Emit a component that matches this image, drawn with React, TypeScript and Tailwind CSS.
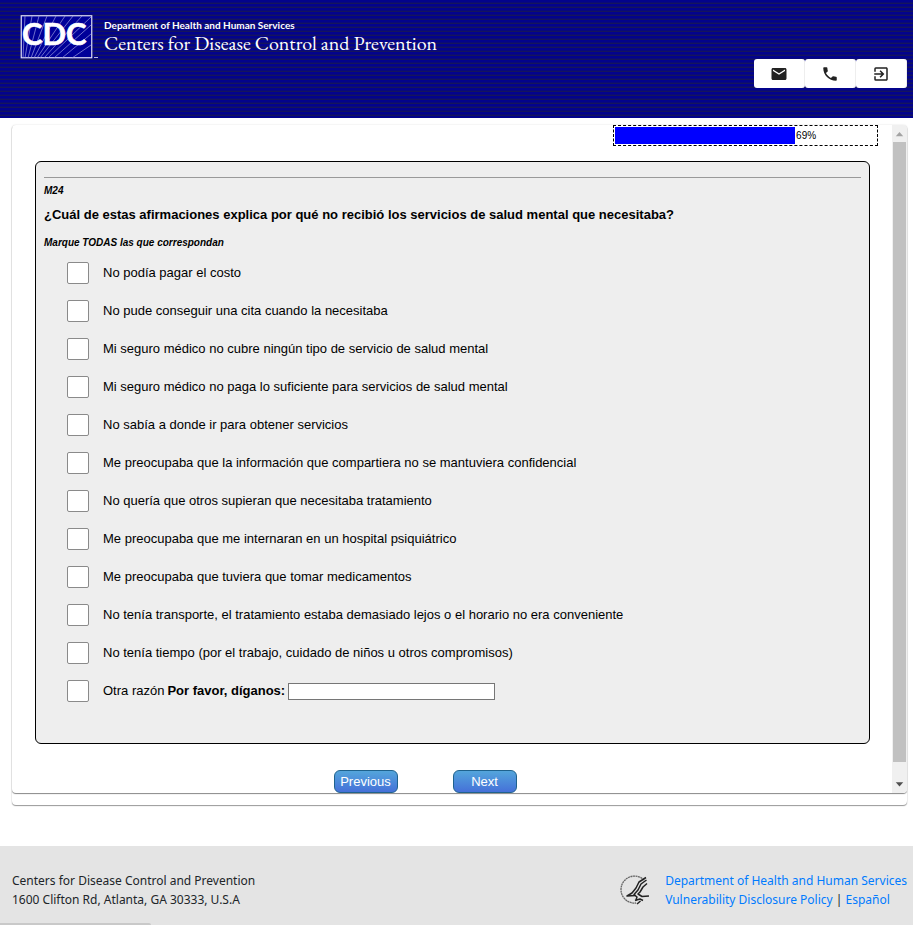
import { MdEmail, MdExitToApp, MdPhone } from 'react-icons/md';

const options = [
  'No podía pagar el costo',
  'No pude conseguir una cita cuando la necesitaba',
  'Mi seguro médico no cubre ningún tipo de servicio de salud mental',
  'Mi seguro médico no paga lo suficiente para servicios de salud mental',
  'No sabía a donde ir para obtener servicios',
  'Me preocupaba que la información que compartiera no se mantuviera confidencial',
  'No quería que otros supieran que necesitaba tratamiento',
  'Me preocupaba que me internaran en un hospital psiquiátrico',
  'Me preocupaba que tuviera que tomar medicamentos',
  'No tenía transporte, el tratamiento estaba demasiado lejos o el horario no era conveniente',
  'No tenía tiempo (por el trabajo, cuidado de niños u otros compromisos)',
];

const headerActions = [
  { label: 'Email', Icon: MdEmail },
  { label: 'Phone', Icon: MdPhone },
  { label: 'Exit', Icon: MdExitToApp },
];

const checkboxClass =
  'h-[22px] w-[22px] shrink-0 appearance-none rounded-[2px] border border-[#8a8a8a] bg-white checked:bg-blue-600';

function CdcLogo() {
  return (
    <svg viewBox="0 0 78 44" className="h-11 w-[78px] shrink-0" role="img" aria-label="CDC">
      <rect x="1.25" y="0.75" width="70.5" height="42" fill="#000099" stroke="#ddddf5" strokeWidth="1.2" />
      <g stroke="#9c9ce0" strokeWidth="0.7">
        <path d="M3 43L5 1M5 43L12 1M8 43L19 1M11 43L27 1M14 43L36 1M17 43L45 1M20 43L53 1M24 43L62 1M28 43L71 2M34 43L71 10M42 43L71 19M52 43L71 30" />
      </g>
      <text
        x="2"
        y="30"
        fill="#fff"
        stroke="#fff"
        strokeWidth="0.6"
        fontSize="31"
        fontWeight="700"
        fontFamily="Lato, sans-serif"
      >
        CDC
      </text>
      <path d="M74 42.5h4" stroke="#b8b8dd" strokeWidth="1" />
    </svg>
  );
}

function HhsLogo() {
  return (
    <svg viewBox="0 0 30 30" className="h-[30px] w-[30px] shrink-0" role="img" aria-label="HHS" fill="none">
      <path d="M25 5A13.5 13.5 0 1 0 17 28" stroke="#666" strokeWidth="1.3" strokeDasharray="2 0.5" />
      <g stroke="#222" strokeWidth="1.5" strokeLinejoin="round">
        <path d="M27 2.5L20 7L17 13L13 18L8 21L17 20.5" />
        <path d="M27.5 5L22 9L19 15L15 19.5L18 22L17 25" />
        <path d="M28 8.5L24 12L21 17L19 19L23 21.5L30 21" />
        <path d="M16 25.5L21 24L24 25.5M18 29L21.5 26" />
      </g>
    </svg>
  );
}

function Header() {
  return (
    <header className="h-[118px] bg-[repeating-linear-gradient(to_bottom,#03038c_0px,#03038c_2px,#0a0a78_2px,#0a0a78_3px,#15155c_3px,#15155c_4px)] pt-[15px] pr-1.5 pl-5 text-white">
      <div className="flex items-start gap-1.5">
        <CdcLogo />
        <div className="pt-1">
          <p className="font-[Lato,sans-serif] text-[10px] leading-3 font-bold">
            Department of Health and Human Services
          </p>
          <p className="font-['EB_Garamond','Liberation_Serif',serif] text-[20px] leading-6">
            Centers for Disease Control and Prevention
          </p>
        </div>
      </div>
      <div className="flex justify-end">
        {headerActions.map(({ label, Icon }) => (
          <button
            key={label}
            type="button"
            aria-label={label}
            className="flex h-[29px] w-[51px] items-center justify-center rounded-[3px] border-r border-[#eee] bg-white text-[#222]"
          >
            <Icon size={18} />
          </button>
        ))}
      </div>
    </header>
  );
}

function ProgressBar({ value }: { value: number }) {
  return (
    <div className="flex h-[21px] w-[265px] border border-dashed border-black p-px">
      <div className="h-[17px] bg-[#0000ff]" style={{ width: `${value}%` }} />
      <span className="pl-px text-[10px] leading-[17px]">{value}%</span>
    </div>
  );
}

function ScrollTrack() {
  return (
    <div className="flex w-[15px] shrink-0 flex-col items-center rounded-r-sm bg-[#f0f0f0]">
      <svg viewBox="0 0 16 17" className="h-[17px] w-[15px]">
        <path d="M4 11.5L8 7L12 11.5z" fill="#a3a3a3" />
      </svg>
      <div className="h-[620px] w-[13px] bg-[#c1c1c1]" />
      <div className="grow" />
      <svg viewBox="0 0 16 17" className="h-[17px] w-[15px]">
        <path d="M4 6L8 10.5L12 6z" fill="#505050" />
      </svg>
    </div>
  );
}

function Survey() {
  return (
    <fieldset className="mt-[15px] mr-2 ml-[23px] rounded-md border border-black bg-[#eee] px-2 pt-[15px] pb-[33px]">
      <hr className="border-[#999]" />
      <p className="mt-[7px] text-[10px] leading-3 font-bold italic">M24</p>
      <h1 className="mt-2.5 text-[13px] leading-4 font-bold">
        ¿Cuál de estas afirmaciones explica por qué no recibió los servicios de salud mental que necesitaba?
      </h1>
      <p className="mt-3.5 text-[10px] leading-3 font-bold italic">Marque TODAS las que correspondan</p>
      <ul className="mt-[5px] pl-[23px] text-[13px] leading-4">
        {options.map((option) => (
          <li key={option} className="flex h-[38px] items-center">
            <label className="flex items-center gap-3.5">
              <input type="checkbox" className={checkboxClass} />
              {option}
            </label>
          </li>
        ))}
        <li className="flex h-[38px] items-center">
          <label className="flex items-center gap-3.5">
            <input type="checkbox" className={checkboxClass} />
            Otra razón
          </label>
          <label htmlFor="other" className="pl-[3px] font-bold">
            Por favor, díganos:
          </label>
          <input
            id="other"
            type="text"
            className="ml-[3px] h-[17px] w-[207px] border border-[#767676] bg-white px-0.5"
          />
        </li>
      </ul>
    </fieldset>
  );
}

const navButtonClass =
  'h-[23px] w-16 rounded-md border border-[#1f628d] bg-linear-to-b from-[#54a5db] to-[#4670d8] text-[13px] leading-4 text-white';

export default function App() {
  return (
    <div className="bg-white font-['Liberation_Sans',Arial,sans-serif] text-black">
      <Header />
      <main className="mt-[7px] mr-1.5 ml-3 rounded-sm pb-3 shadow-[0_1px_1px_#999,0_0_2px_#ddd]">
        <div className="flex rounded-sm shadow-[0_1px_1px_#888]">
          <div className="grow pr-3.5">
            <div className="flex justify-end">
              <ProgressBar value={69} />
            </div>
            <Survey />
            <div className="mt-[26px] flex justify-center gap-[55px] pr-10">
              <button type="button" className={navButtonClass}>
                Previous
              </button>
              <button type="button" className={navButtonClass}>
                Next
              </button>
            </div>
          </div>
          <ScrollTrack />
        </div>
      </main>
      <footer className="mt-[41px] bg-[#e4e4e4] font-['Noto_Sans',sans-serif] text-[12px] leading-[19px] text-[#212529]">
        <div className="flex h-[77px] items-center justify-between pt-2.5 pr-1.5 pl-3">
          <address className="not-italic">
            Centers for Disease Control and Prevention
            <br />
            1600 Clifton Rd, Atlanta, GA 30333, U.S.A
          </address>
          <div className="flex items-center gap-4">
            <HhsLogo />
            <div>
              <a href="#hhs" className="text-[#007bff]">
                Department of Health and Human Services
              </a>
              <br />
              <a href="#policy" className="text-[#007bff]">
                Vulnerability Disclosure Policy
              </a>{' '}
              |{' '}
              <a href="#es" className="text-[#007bff]">
                Español
              </a>
            </div>
          </div>
        </div>
        <div className="h-0.5 w-[151px] rounded-tr-sm bg-[#c9c9c9]" />
      </footer>
    </div>
  );
}
